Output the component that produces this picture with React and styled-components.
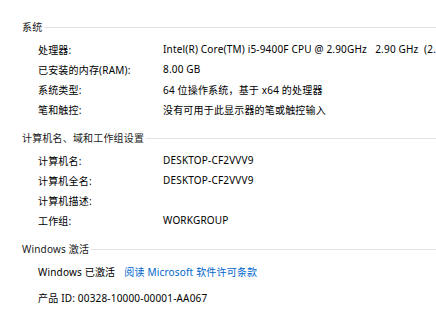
import { Fragment } from "react";
import styled, { createGlobalStyle } from "styled-components";

const GlobalStyle = createGlobalStyle`
    html, body {
        margin: 0;
        padding: 0;
        background: #FFF;
        overflow: hidden;
    }
    body {
        font-family: "Noto Sans", "Noto Sans CJK SC", sans-serif;
        font-size: 10px;
        letter-spacing: 0.18px;
        color: #000;
    }
`

const Page = styled.div`
    width: 436px;
    height: 328px;
    padding: 16px 0 0 22px;
    box-sizing: border-box;
    overflow: hidden;
    white-space: nowrap;
`

const Section = styled.section`
    & + & {
        margin-top: 8px;
    }
`

const Header = styled.div`
    display: flex;
    align-items: center;
    height: 20px;
    margin-bottom: 3px;
    color: #1a1a1a;
    &::after {
        content: "";
        flex: 1;
        height: 1px;
        margin-left: 2px;
        margin-top: 2px;
        background: #e3e3e3;
    }
`

const Rows = styled.div`
    display: grid;
    grid-template-columns: 125px 1fr;
    grid-auto-rows: 20px;
    align-items: center;
    padding-left: 16px;
`

const Label = styled.span`
    color: #000;
`

const Value = styled.span`
    white-space: pre;
`

const Line = styled.div`
    display: flex;
    align-items: center;
    gap: 9px;
    height: 20px;
    padding-left: 16px;
    margin-top: ${p => p.$gap || 0}px;
`

const Link = styled.a`
    color: #0066cc;
    text-decoration: none;
    cursor: pointer;
`

const sistema = [
    ['处理器:', 'Intel(R) Core(TM) i5-9400F CPU @ 2.90GHz   2.90 GHz  (2.90 GHz)'],
    ['已安装的内存(RAM):', '8.00 GB'],
    ['系统类型:', '64 位操作系统，基于 x64 的处理器'],
    ['笔和触控:', '没有可用于此显示器的笔或触控输入'],
]

const computador = [
    ['计算机名:', 'DESKTOP-CF2VVV9'],
    ['计算机全名:', 'DESKTOP-CF2VVV9'],
    ['计算机描述:', ''],
    ['工作组:', 'WORKGROUP'],
]

function InfoRows({itens}){
    return(
        <Rows>
            {itens.map(([label, value]) => (
                <Fragment key={label}>
                    <Label>{label}</Label>
                    <Value>{value}</Value>
                </Fragment>
            ))}
        </Rows>
    )
}

function App(){
    return(
        <>
            <GlobalStyle />
            <Page>
                <Section>
                    <Header>系统</Header>
                    <InfoRows itens={sistema} />
                </Section>
                <Section>
                    <Header>计算机名、域和工作组设置</Header>
                    <InfoRows itens={computador} />
                </Section>
                <Section>
                    <Header>Windows 激活</Header>
                    <Line>
                        <span>Windows 已激活</span>
                        <Link>阅读 Microsoft 软件许可条款</Link>
                    </Line>
                    <Line $gap={6}>产品 ID: 00328-10000-00001-AA067</Line>
                </Section>
            </Page>
        </>
    )
}

export default App
